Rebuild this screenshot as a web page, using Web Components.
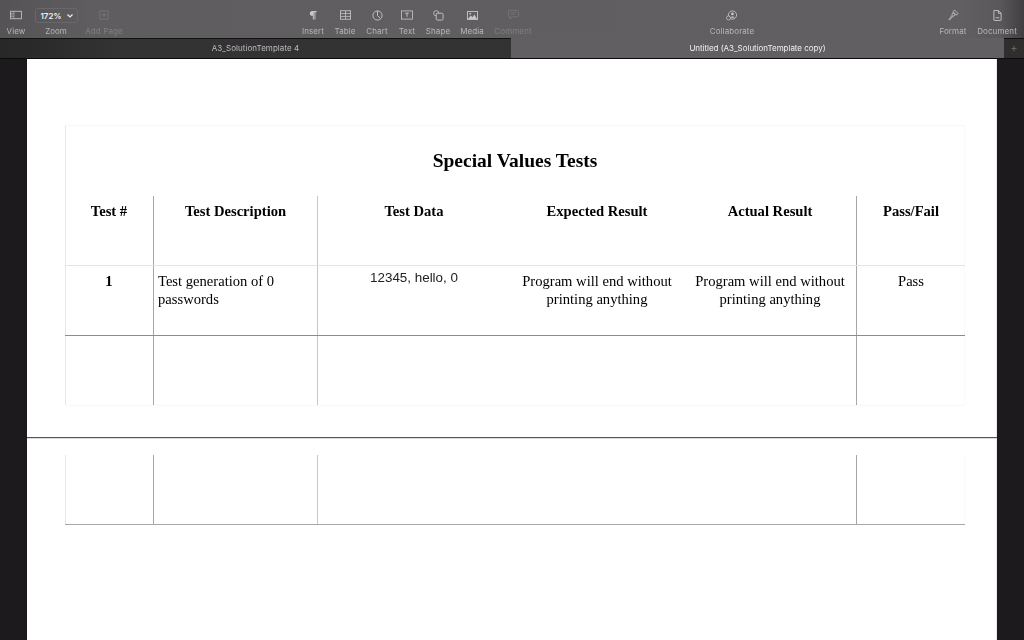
<!DOCTYPE html>
<html>
<head>
<meta charset="utf-8">
<style>
html, body { margin: 0; height: 100%; overflow: hidden; background: #1c1a1c; }
</style>
</head>
<body>
<app-shell>
  <mac-toolbar>
    <tool-item w="32" label="View"><svg width="12" height="10" viewBox="0 0 14 12"><rect x=".5" y="1.500" width="13" height="9" fill="none" stroke="currentColor"/><path d="M4.500 1.500v9M1 4h3M1 6h3M1 8h3" stroke="currentColor" stroke-width=".7" fill="none"/></svg></tool-item>
    <zoom-box></zoom-box>
    <tool-item w="48" label="Add Page" off><svg width="10" height="10" viewBox="0 0 12 12"><rect x="1" y="1" width="10" height="10" rx="1" fill="none" stroke="currentColor"/><path d="M6 3.500v5M3.500 6h5" stroke="currentColor" fill="none"/></svg></tool-item>
    <tool-gap w="169"></tool-gap>
    <tool-item w="32" label="Insert"><svg width="8" height="10" viewBox="0 0 10 12"><path d="M3.800 1H9.500v1.500H8V11.500H6.800V2.500H6V11.500H4.800V7H3.800C2.300 7 1 5.500 1 4S2.300 1 3.800 1Z" fill="currentColor"/></svg></tool-item>
    <tool-item w="32" label="Table"><svg width="11" height="10" viewBox="0 0 13 11"><rect x=".5" y=".5" width="12" height="10" fill="none" stroke="currentColor"/><path d="M.5 3.800h12M.5 7.200h12M6.500 .5v10" stroke="currentColor" stroke-width=".9" fill="none"/></svg></tool-item>
    <tool-item w="32" label="Chart"><svg width="11" height="11" viewBox="0 0 12 12"><circle cx="6" cy="6" r="5" fill="none" stroke="currentColor"/><path d="M6 1V6l3 3" stroke="currentColor" fill="none"/></svg></tool-item>
    <tool-item w="28" label="Text"><svg width="12" height="10" viewBox="0 0 13 11"><rect x=".5" y="1" width="12" height="9" fill="none" stroke="currentColor" stroke-width=".9"/><path d="M4.500 3.500h4M6.500 3.500V7.500" stroke="currentColor" fill="none"/></svg></tool-item>
    <tool-item w="34" label="Shape"><svg width="11" height="11" viewBox="0 0 12 12"><circle cx="3.500" cy="3.500" r="2.800" fill="none" stroke="currentColor" stroke-width=".9"/><rect x="3.500" y="3.500" width="7.500" height="7.500" rx="1.500" fill="#625f62" stroke="currentColor"/></svg></tool-item>
    <tool-item w="34" label="Media"><svg width="11" height="9" viewBox="0 0 12 10"><rect x=".5" y=".5" width="11" height="9" fill="none" stroke="currentColor"/><path d="M1 9l3-4 2 2 2-3 3 5Z" fill="currentColor"/><circle cx="3.500" cy="3" r="1" fill="currentColor"/></svg></tool-item>
    <tool-item w="48" label="Comment" off><svg width="11" height="10" viewBox="0 0 12 11"><path d="M2 .5h8a1.500 1.500 0 0 1 1.500 1.500v4A1.500 1.500 0 0 1 10 7.500H5L2.500 10V7.500H2A1.500 1.500 0 0 1 .5 6V2A1.500 1.500 0 0 1 2 .5Z" fill="none" stroke="currentColor" stroke-width=".8"/><path d="M3 3h6M3 5h4" stroke="currentColor" stroke-width=".7" fill="none"/></svg></tool-item>
    <tool-gap w="165"></tool-gap>
    <tool-item w="60" label="Collaborate"><svg width="12" height="11" viewBox="0 0 13 12"><circle cx="7" cy="5.500" r="4.500" fill="none" stroke="currentColor" stroke-width=".9"/><circle cx="7" cy="4.300" r="1.500" fill="currentColor"/><path d="M4.700 8.500c.4-1.700 4.200-1.700 4.600 0Z" fill="currentColor"/><circle cx="2.700" cy="8.700" r="2.200" fill="#625f62" stroke="currentColor" stroke-width=".8"/></svg></tool-item>
    <tool-gap w="171"></tool-gap>
    <tool-item w="40" label="Format"><svg width="11" height="12" viewBox="0 0 12 13"><path d="M7 1l4 4-2 1.500L5.500 3ZM5.500 4l2.500 2.500-2.500 1.500-1.500-1.500ZM4 7.500L5 8.500 1.500 12 1 11.500Z" fill="none" stroke="currentColor" stroke-width=".9"/></svg></tool-item>
    <tool-item w="48" label="Document"><svg width="9" height="11" viewBox="0 0 10 12"><path d="M1 .5h5L9 3.500V11a.5.500 0 0 1-.5.500h-7A.5.500 0 0 1 1 11Z M6 .5V3.500H9" fill="none" stroke="currentColor"/><path d="M3 8.500h4" stroke="currentColor" fill="none"/></svg></tool-item>
  </mac-toolbar>
  <tab-bar>
    <tab-item w="511">A3_SolutionTemplate 4</tab-item>
    <tab-item w="493" active>Untitled (A3_SolutionTemplate copy)</tab-item>
    <tab-add></tab-add>
  </tab-bar>
  <doc-page>
    <test-table>
      <test-title>Special Values Tests</test-title>
      <test-row kind="head">
        <test-cell head>Test #</test-cell>
        <test-cell head line>Test Description</test-cell>
        <test-cell head line="soft">Test Data</test-cell>
        <test-cell head>Expected Result</test-cell>
        <test-cell head>Actual Result</test-cell>
        <test-cell head line>Pass/Fail</test-cell>
      </test-row>
      <test-row kind="dark">
        <test-cell strong>1</test-cell>
        <test-cell line left>Test generation of 0 passwords</test-cell>
        <test-cell line="soft" sans>12345, hello, 0</test-cell>
        <test-cell>Program will end without printing anything</test-cell>
        <test-cell>Program will end without printing anything</test-cell>
        <test-cell line>Pass</test-cell>
      </test-row>
      <test-row kind="end">
        <test-cell></test-cell><test-cell line></test-cell><test-cell line="soft"></test-cell>
        <test-cell></test-cell><test-cell></test-cell><test-cell line></test-cell>
      </test-row>
    </test-table>
    <page-break></page-break>
    <test-table>
      <test-row kind="last">
        <test-cell></test-cell><test-cell line></test-cell><test-cell line="soft"></test-cell>
        <test-cell></test-cell><test-cell></test-cell><test-cell line></test-cell>
      </test-row>
    </test-table>
  </doc-page>
</app-shell>
<script>
// small helper, every element below is just a shadow root with some css
class Base extends HTMLElement {
    constructor() {
        super();
        this._root = this.attachShadow({ mode: 'open' });
    }
    connectedCallback() {
        this._root.innerHTML = `<style>${this.css()}</style>${this.html()}`;
    }
    css() { return ':host{display:block}'; }
    html() { return '<slot></slot>'; }
}

class AppShell extends Base {
    css() { return ':host{display:flex;flex-direction:column;width:1024px;height:640px;overflow:hidden;background:#1c1a1c}'; }
}

class MacToolbar extends Base {
    css() {
        return `:host{display:flex;height:38px;flex:none;box-sizing:border-box;padding:0 3px 0 0;
            background:linear-gradient(90deg,#555356 0,#605d60 90px,#625f62 960px,#5a585a 1000px,#403e40 1024px);
            font-family:Inter,"Liberation Sans",sans-serif}`;
    }
}

class ToolItem extends Base {
    css() {
        const w = this.getAttribute('w');
        const off = this.hasAttribute('off');
        return `:host{display:flex;flex:none;flex-direction:column;align-items:center;width:${w}px;color:${off ? '#7d7a7d' : '#c8c6c8'}}
        .icon{height:14px;margin-top:8px;display:flex;align-items:center;justify-content:center}
        .label{margin-top:4px;font-size:8px;line-height:10px;white-space:nowrap;letter-spacing:.1px;filter:blur(.3px);color:${off ? '#817e81' : '#b8b6b8'}}
        ::slotted(svg){display:block}`;
    }
    html() {
        return `<div class="icon"><slot></slot></div><div class="label">${this.getAttribute('label')}</div>`;
    }
}

class ToolGap extends Base {
    css() { return `:host{display:block;flex:none;width:${this.getAttribute('w')}px}`; }
    html() { return ''; }
}

class ZoomBox extends Base {
    css() {
        return `:host{display:flex;flex:none;flex-direction:column;align-items:center;width:48px}
        .box{box-sizing:border-box;width:43px;height:15px;margin:8px 0 0 1px;border:1px solid #6a676a;border-radius:3px;display:flex;align-items:center;justify-content:center;gap:5px;color:#f0eff0;font-size:8px;font-weight:600}
        .label{margin-top:3px;font-size:8px;line-height:10px;filter:blur(.3px);color:#b8b6b8}`;
    }
    html() {
        return `<div class="box"><span>172%</span><svg width="6" height="4" viewBox="0 0 6 4"><path d="M.5 .5L3 3 5.500 .5" fill="none" stroke="currentColor" stroke-width="1.200"/></svg></div><div class="label">Zoom</div>`;
    }
}

class TabBar extends Base {
    css() { return ':host{display:flex;height:21px;flex:none;box-sizing:border-box;border-bottom:1px solid #0c0b0c;font-family:Inter,"Liberation Sans",sans-serif;font-size:8px}'; }
}

class TabItem extends Base {
    css() {
        const active = this.hasAttribute('active');
        return `:host{display:flex;flex:none;width:${this.getAttribute('w')}px;align-items:center;justify-content:center;box-sizing:border-box;
            ${active
                ? 'background:#625f62;color:#f2f1f2;'
                : 'background:linear-gradient(90deg,#282728 0,#343334 120px);color:#bdbbbd;box-shadow:inset 0 1px 0 #121112;'}
            white-space:nowrap;letter-spacing:${active ? '-.03px' : '.05px'}}`;
    }
    html() { return '<span style="filter:blur(.25px)"><slot></slot></span>'; }
}

class TabAdd extends Base {
    css() { return ':host{display:flex;flex:1;align-items:center;justify-content:center;background:#2f2e2f;color:#6d6b6d;font-size:11px;box-shadow:inset 0 1px 0 #121112}'; }
    html() { return '+'; }
}

class DocPage extends Base {
    css() {
        return `:host{display:block;box-sizing:border-box;flex:1;width:970px;margin-left:27px;padding:66px 32px 0 38px;background:#fff;color:#000;
            box-shadow:inset -1px 0 0 #e8e8e8;
            font-family:"Liberation Serif","Times New Roman",serif}`;
    }
}

class TestTable extends Base {
    css() { return ':host{display:block;width:900px;box-shadow:inset 1px 0 0 #e6e6e6,inset -1px 0 0 #fafafa}'; }
}

class TestTitle extends Base {
    css() { return ':host{display:block;height:71px;box-sizing:border-box;border-top:1px solid #f8f8f8;padding-top:23px;text-align:center;font-size:19.5px;line-height:23px;font-weight:700;filter:blur(.25px)}'; }
}

class TestRow extends Base {
    css() {
        const lines = { head: '#e4e4e4', dark: '#8c8c8c', end: '#f8f8f8', last: '#a8a8a8' };
        return `:host{display:grid;grid-template-columns:88px 164px 193px 174px 172px 109px;height:70px;box-sizing:border-box;border-bottom:1px solid ${lines[this.getAttribute('kind')]}}`;
    }
}

class TestCell extends Base {
    css() {
        const line = this.getAttribute('line');
        const border = line === null ? '' : `border-left:1px solid ${line === 'soft' ? '#c6c6c6' : '#a6a6a6'};`;
        const sans = this.hasAttribute('sans');
        return `:host{display:block;box-sizing:border-box;${border}
            padding:${sans ? '3px' : '6px'} ${this.hasAttribute('left') ? '4px' : '8px'} 0 ${this.hasAttribute('left') ? '4px' : '8px'};
            text-align:${this.hasAttribute('left') ? 'left' : 'center'};
            font-size:${sans ? '13.4px' : '14.6px'};line-height:18px;
            font-weight:${this.hasAttribute('head') || this.hasAttribute('strong') ? 700 : 400};
            ${sans ? 'font-family:"Liberation Sans",Arial,sans-serif;color:#222;' : ''}}`;
    }
    html() { return '<div style="filter:blur(.25px)"><slot></slot></div>'; }
}

class PageBreak extends Base {
    css() { return ':host{display:block;height:1px;margin:31px -32px 17px -38px;background:#555;box-shadow:0 1px 0 #ddd}'; }
    html() { return ''; }
}

window.customElements.define('app-shell', AppShell);
window.customElements.define('mac-toolbar', MacToolbar);
window.customElements.define('tool-item', ToolItem);
window.customElements.define('tool-gap', ToolGap);
window.customElements.define('zoom-box', ZoomBox);
window.customElements.define('tab-bar', TabBar);
window.customElements.define('tab-item', TabItem);
window.customElements.define('tab-add', TabAdd);
window.customElements.define('doc-page', DocPage);
window.customElements.define('test-table', TestTable);
window.customElements.define('test-title', TestTitle);
window.customElements.define('test-row', TestRow);
window.customElements.define('test-cell', TestCell);
window.customElements.define('page-break', PageBreak);
</script>
</body>
</html>
